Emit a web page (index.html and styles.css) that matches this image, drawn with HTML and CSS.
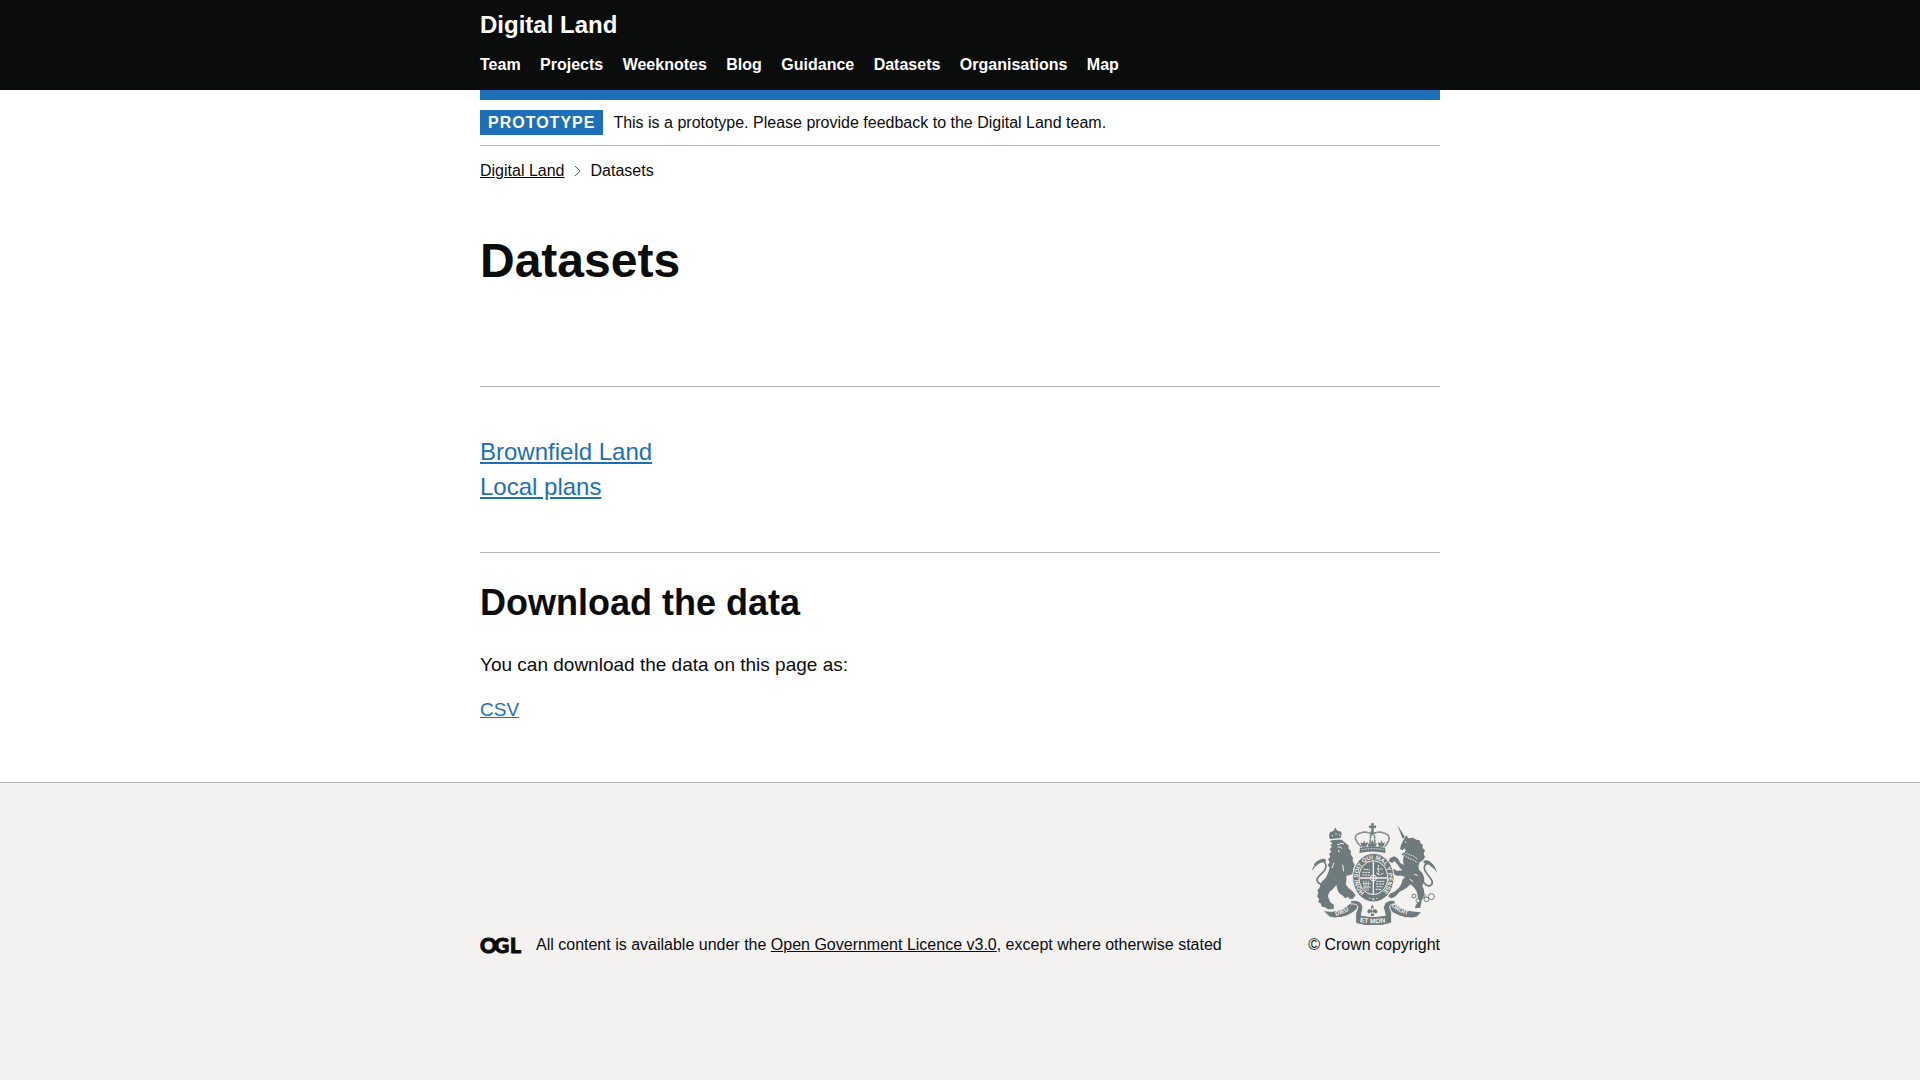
FILE: index.html
```html
<!DOCTYPE html>
<html lang="en">
<head>
  <meta charset="utf-8">
  <meta name="viewport" content="width=device-width, initial-scale=1">
  <title>Datasets - Digital Land</title>
  <link rel="stylesheet" href="styles.css">
</head>
<body>
  <header class="header">
    <div class="container">
      <a class="site-name" href="#">Digital Land</a>
      <nav aria-label="Main">
        <ul class="nav-list">
          <li><a href="#">Team</a></li>
          <li><a href="#">Projects</a></li>
          <li><a href="#">Weeknotes</a></li>
          <li><a href="#">Blog</a></li>
          <li><a href="#">Guidance</a></li>
          <li><a href="#">Datasets</a></li>
          <li><a href="#">Organisations</a></li>
          <li><a href="#">Map</a></li>
        </ul>
      </nav>
    </div>
  </header>

  <div class="container">
    <div class="phase-banner">
      <strong class="tag">PROTOTYPE</strong>
      <span>This is a prototype. Please provide feedback to the Digital Land team.</span>
    </div>
    <nav class="breadcrumbs" aria-label="Breadcrumb">
      <a href="#">Digital Land</a>
      <svg class="chevron" viewBox="0 0 8 12" aria-hidden="true"><path d="M1 1l5 5-5 5" fill="none" stroke="#505a5f"/></svg>
      <span>Datasets</span>
    </nav>

    <main class="main">
      <h1>Datasets</h1>
      <hr>
      <ul class="dataset-list">
        <li><a class="link" href="#">Brownfield Land</a></li>
        <li><a class="link" href="#">Local plans</a></li>
      </ul>
      <hr>
      <section class="download">
        <h2>Download the data</h2>
        <p>You can download the data on this page as:</p>
        <p><a class="link" href="#">CSV</a></p>
      </section>
    </main>
  </div>

  <footer class="footer">
    <div class="container footer-inner">
      <div class="licence">
        <svg class="ogl" viewBox="0 0 41 17" role="img" aria-label="Open Government Licence"><text class="ogl-text" x="0 14 30" y="16">OGL</text></svg>
        <span>All content is available under the <a href="#">Open Government Licence v3.0</a>, except where otherwise stated</span>
      </div>
      <a class="copyright" href="#">
        <svg class="crest" viewBox="37 38 375 306" aria-hidden="true">
          <defs>
            <path id="garter-path" d="M195 247A45.500 55 0 1 1 247 247"/>
            <path id="left-scroll" d="M108 316Q145 308 168 284"/>
            <path id="right-scroll" d="M275 287Q298 310 338 317"/>
            <path id="base-scroll" d="M180 335Q220 343 268 334"/>
          </defs>
          <g class="lines">
            <!-- tails -->
            <path d="M78 224Q53 223 52 208c0-14 31-23 27-43-3-16-23-18-35-1" stroke-width="5"/>
            <path d="M37 181q2-13 13-20 5-15 20-16 12-1 8 9-20 2-25 10-10 6-16 17z" class="ink"/>
            <path d="M364 204q16 30 30 20c17-14-25-36-20-55 4-15 24-13 30 5" stroke-width="5"/>
            <path d="M411 187q-2-16-12-22-7-15-20-15-12 1-6 9 16 1 20 9 12 6 18 19z" class="ink"/>
          </g>
          <g class="ink">
            <!-- lion -->
            <path d="M91 87q-5-11-1-19 2-6 8-4 2-5 6-5l1-6h4l1 6q5 0 6 4 9-2 10 6 0 9-4 15z"/>
            <path d="M90 92Q108 84 126 88L140 100 147 106 146 114 154 122 153 132 160 142 159 152 165 164 160 176 163 188 152 194 140 196Q142 210 138 222 146 236 158 242L168 254 160 265 150 266 146 259 136 264 130 256Q118 252 114 240L110 224Q100 238 90 244 82 256 88 266L92 276 103 284 102 296 84 297 76 291 66 289 64 280 56 276 58 266 52 258 56 248 53 240 60 232Q62 214 78 204L86 186 90 172 84 164 90 156 85 146 92 140 88 130 95 124 90 116 97 110 92 104 99 100z"/>
            <!-- unicorn -->
            <path d="M293 44l23 36-7 5z"/>
            <path d="M301 116L304 104 311 90 320 75 326 84 340 82 350 88 360 90 362 98 370 104 368 112 376 120 372 130 376 140 370 150 360 156Q354 166 358 178 372 188 374 206 376 216 368 226 376 240 374 254L366 272 362 292 346 294 348 284 356 276 354 256Q352 240 342 230L332 222Q318 238 300 244L288 258 276 264 266 260 270 250 284 244Q300 234 306 218 308 206 316 200L306 196 292 196 280 190 276 180 284 176 292 182 308 180 300 172 292 160 284 152 278 158 268 154 270 144 284 138 294 144 302 158 312 164Q308 150 312 138L306 132 318 122 316 114 308 120z"/>
            <!-- crown -->
            <path d="M214 39h9l-1 8 7-2v9l-7-2 1 9h-9l1-9-7 2v-9l7 2z"/>
            <circle cx="218" cy="67" r="6"/>
            <path d="M181 112q38-7 75 0l2 16q-39-9-79 0z"/>
            <path d="M187 110l-5-14 8 3 3-9 4 9 7-4-3 13zM207 109l-5-10 10 3 6-14 6 14 9-3-6 10zM238 109l-4-13 8 3 3-9 4 9 7-4-5 14z"/>
          </g>
          <g class="lines">
            <path d="M184 109Q152 77 182 68q19-7 35 5 17-12 36-5 30 9 1 42M213 74l-2 27M224 74l2 27" stroke-width="5" stroke-dasharray="4 1"/>
          </g>
          <g class="cuts">
            <path d="M112 104l13-5M124 98l9 3M114 112l6-3 8 6M91 88l37-3M98 78v-4M109 74v-5M120 76v-4M116 119l3 7"/>
            <path d="M316 94l5 3M312 124l15 8 14 5 14 10M311 133l13 9 17 7 13 8" stroke-dasharray="5 3"/>
            <path d="M103 157l-6 16M129 163l3 20M330 206l10 8M344 192l10 3"/>
            <path d="M186 118q32-6 66 0" stroke-dasharray="5 4"/>
          </g>
          <!-- garter and shield -->
          <ellipse class="ink edged" cx="221" cy="202" rx="62" ry="73"/>
          <ellipse class="ring" cx="221" cy="202" rx="43" ry="51"/>
          <g class="cuts">
            <path d="M221 153v98M180 203h82" stroke-width="4"/>
            <path d="M192 177l19 1M189 186h24M188 194h23M232 176h18M230 188l10 6 12-6M236 164v32" stroke-dasharray="6 2"/>
            <path d="M192 211l2 25M199 211v31M206 211l-1 32M189 220h25M190 230h24" stroke-width="2"/>
            <path d="M230 213h24M229 221h24M230 229h20M228 237h17" stroke-dasharray="7 2"/>
          </g>
          <circle class="ring" cx="221" cy="203" r="9"/>
          <circle class="paper" cx="210" cy="264" r="2"/><circle class="paper" cx="221" cy="267" r="3"/><circle class="paper" cx="232" cy="264" r="2"/>
          <!-- motto scroll -->
          <path class="ink edged" d="M70 301l27 2Q138 300 158 270l22 9-5 14Q148 323 104 323L90 320zM366 304l-27-2Q299 298 278 270l-22 9 9 16Q295 324 338 323l14-3z"/>
          <path class="ink edged" d="M154 270q32-3 36 21l-5 24q34 8 72 0l-6-24q4-24 34-21l3 12q-17-3-18 8l6 17v31q-54 18-108 1v-31l7-18q-2-11-23-9z"/>
          <path class="ink" d="M218 283q7 7 2 16 12-6 13 5-1 8-11 4l1 9h-10l1-9q-10 4-11-4 1-11 13-5-5-9 2-16z"/>
          <path class="cuts" d="M211 308h14M218 292v10"/>
          <g class="lines">
            <circle class="paper" cx="343" cy="257" r="6"/><circle class="paper" cx="355" cy="271" r="6"/>
            <circle cx="371" cy="256" r="6"/><circle cx="380" cy="267" r="7"/><circle cx="395" cy="259" r="9"/>
          </g>
          <g class="crest-text">
            <text font-size="18"><textPath href="#garter-path">HONI SOIT QUI MAL Y PENSE</textPath></text>
            <text font-size="18"><textPath href="#left-scroll">DIEU</textPath></text>
            <text font-size="18"><textPath href="#right-scroll">DROIT</textPath></text>
            <text font-size="20"><textPath href="#base-scroll">ET MON</textPath></text>
          </g>
        </svg>
        <span>© Crown copyright</span>
      </a>
    </div>
  </footer>
</body>
</html>
```
FILE: styles.css
```css
* {
  box-sizing: border-box;
}

html {
  background: #f3f2f1;
}

body {
  margin: 0;
  background: #fff;
  color: #0b0c0c;
  font: 16px/20px "Liberation Sans", Arial, sans-serif;
}

a {
  color: inherit;
}

ul {
  margin: 0;
  padding: 0;
  list-style: none;
}

.container {
  max-width: 960px;
  margin: 0 auto;
}

.header {
  padding: 10px 0 15px;
  background: #0b0c0c;
  color: #fff;
  font-weight: 700;
}

.header a {
  text-decoration: none;
}

.site-name {
  display: block;
  margin-bottom: 15px;
  font-size: 24px;
  line-height: 30px;
}

.nav-list li {
  display: inline-block;
  margin-right: 15px;
}

.phase-banner {
  display: flex;
  align-items: center;
  gap: 10px;
  padding: 10px 0;
  border-top: 10px solid #1d70b8;
  border-bottom: 1px solid #b1b4b6;
}

.tag {
  padding: 3px 8px 2px;
  background: #1d70b8;
  color: #fff;
  letter-spacing: 1px;
}

.breadcrumbs {
  display: flex;
  align-items: center;
  gap: 9px;
  margin-top: 15px;
}

.chevron {
  width: 8px;
  height: 12px;
}

.main {
  padding: 55px 0 60px;
}

h1,
h2,
p {
  margin: 0;
}

h1 {
  margin-bottom: 100px;
  font-size: 48px;
  line-height: 50px;
}

hr {
  height: 1px;
  margin: 0;
  border: 0;
  background: #b1b4b6;
}

.link {
  color: #1d70b8;
}

.dataset-list {
  display: grid;
  gap: 5px;
  padding: 50px 0;
  font-size: 24px;
  line-height: 30px;
}

.download {
  padding-top: 30px;
  font-size: 19px;
  line-height: 25px;
}

h2 {
  margin-bottom: 29px;
  font-size: 36px;
  line-height: 40px;
}

.download p + p {
  margin-top: 20px;
}

.footer {
  padding: 40px 0;
  border-top: 1px solid #b1b4b6;
  background: #f3f2f1;
}

.footer-inner {
  display: flex;
  align-items: flex-end;
  justify-content: space-between;
}

.licence {
  display: flex;
  align-items: center;
  gap: 15px;
}

.ogl {
  width: 41px;
  height: 17px;
  overflow: visible;
}

.ogl-text {
  fill: #0b0c0c;
  stroke: #0b0c0c;
  stroke-width: 1;
  font: 900 21px Lato, sans-serif;
}

.copyright {
  display: flex;
  flex-direction: column;
  align-items: center;
  gap: 10px;
  text-decoration: none;
}

.crest {
  width: 125px;
  height: 102px;
}

.ink {
  fill: #6f7a7c;
}

.paper {
  fill: #f3f2f1;
}

.lines {
  fill: none;
  stroke: #6f7a7c;
  stroke-width: 3;
}

.lines .ink {
  stroke: none;
}

.edged {
  stroke: #f3f2f1;
  stroke-width: 3;
}

.cuts,
.ring {
  fill: none;
  stroke: #f3f2f1;
  stroke-width: 3;
}

.crest-text {
  fill: #f3f2f1;
  font-family: "Liberation Sans", Arial, sans-serif;
  font-weight: 700;
}
```
